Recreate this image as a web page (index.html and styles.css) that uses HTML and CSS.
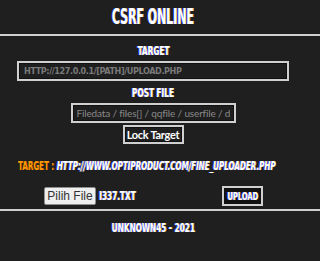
FILE: index.html
```html
<!DOCTYPE html>
<html lang="en">
<head>
    <meta charset="UTF-8">
    <meta name="viewport" content="width=device-width, initial-scale=1.0">
    <title>CSRF Online</title>
    <link rel="stylesheet" href="styles.css">
</head>
<body>
    <h1 class="title"><span class="cond">CSRF ONLINE</span></h1>
    <hr class="rule">

    <form class="panel" onsubmit="return false">
        <label class="label" for="target"><span class="cond">TARGET</span></label>
        <input class="field field-url" id="target" type="text" placeholder="HTTP://127.0.0.1/[PATH]/UPLOAD.PHP">

        <label class="label" for="post"><span class="cond">POST FILE</span></label>
        <input class="field field-post" id="post" type="text" placeholder="Filedata / files[] / qqfile / userfile / dl">

        <button class="lock-btn" type="button">Lock Target</button>
    </form>

    <p class="target-line"><span class="cond cond-left"><span class="target-key">TARGET :</span> <span class="target-val">HTTP://WWW.OPTIPRODUCT.COM/FINE_UPLOADER.PHP</span></span></p>

    <div class="upload-row">
        <div class="file-pick">
            <span class="file-btn">Pilih File</span>
            <span class="file-name"><span class="cond cond-left">I337.TXT</span></span>
        </div>
        <button class="upload-btn" type="button"><span class="cond">UPLOAD</span></button>
    </div>

    <hr class="rule rule-bottom">
    <p class="footer"><span class="cond">UNKNOWN45 - 2021</span></p>
</body>
</html>
```

FILE: styles.css
```css
body {
    margin: 0;
    padding-right: 14px;
    background: #1f1f1f;
    color: #fff;
    font-family: "DejaVu Sans Condensed", "DejaVu Sans", sans-serif;
    text-align: center;
}
/* narrow display face look-alike */
.cond {
    display: inline-block;
    white-space: nowrap;
    transform: scaleX(0.68);
}
.cond-left { transform-origin: left center; }
.title, .label, .footer, .target-line, .upload-btn, .file-name {
    font-weight: bold;
    text-shadow: -1px 0 #3048ff, 1px 0 #e9c76a;
}
.title {
    margin: 0;
    padding-top: 6px;
    font-size: 21px;
    line-height: 22px;
}
.title .cond { transform: scaleX(0.58); }
.rule {
    margin: 6px -14px 0 0;
    border: 0;
    border-top: 2px solid #cfcfcf;
    height: 0;
}
.panel {
    display: flex;
    flex-direction: column;
    align-items: center;
    padding-top: 8px;
}
.label {
    font-size: 12px;
    line-height: 14px;
}
.field {
    box-sizing: border-box;
    height: 20px;
    margin: 3px 0 5px;
    background: #1f1f1f;
    border: 2px solid #d0d0d0;
    outline: 1px solid #111;
    outline-offset: -3px;
    color: #ddd;
    padding: 0 5px;
}
.field-url {
    width: 272px;
    font-family: "DejaVu Sans Condensed", sans-serif;
    font-weight: bold;
    font-size: 9px;
    letter-spacing: -0.4px;
}
.field-post {
    width: 165px;
    margin-bottom: 3px;
    padding: 0 4px;
    font-family: Lato, "Open Sans", sans-serif;
    font-size: 10px;
    letter-spacing: -0.15px;
}
.field::placeholder { color: #8a8a8a; }
.field-url::placeholder { color: #7a7a7a; }
.lock-btn {
    box-sizing: border-box;
    margin-top: -1px;
    height: 19px;
    width: 61px;
    padding: 0;
    background: #1f1f1f;
    border: 2px solid #d0d0d0;
    outline: 1px solid #111;
    outline-offset: -3px;
    color: #fff;
    font-family: Lato, "Open Sans", sans-serif;
    font-size: 11px;
    font-weight: bold;
    letter-spacing: -0.3px;
}
.target-line {
    margin: 15px -14px 0 0;
    padding-left: 18px;
    text-align: left;
    overflow: hidden;
    font-size: 12px;
    line-height: 14px;
}
.target-line .cond { transform: scaleX(0.66); }
.target-key { color: #ff9a00; text-shadow: 1px 0 #7a3a00; }
.target-val { font-style: italic; }
.upload-row {
    display: flex;
    align-items: center;
    justify-content: space-between;
    margin-top: 13px;
    padding: 0 43px 0 44px;
}
.file-pick {
    display: flex;
    align-items: center;
    gap: 3px;
}
.file-btn {
    box-sizing: border-box;
    height: 18px;
    width: 52px;
    line-height: 16px;
    background: #efefef;
    border: 1px solid #8f8f8f;
    border-radius: 2px;
    color: #333;
    font-family: "Liberation Sans", Arial, sans-serif;
    font-size: 12px;
}
.file-name {
    font-size: 12px;
}
.upload-btn {
    box-sizing: border-box;
    height: 20px;
    width: 41px;
    padding: 0;
    background: #111;
    border: 2px solid #d0d0d0;
    outline: 1px solid #111;
    outline-offset: -3px;
    color: #fff;
    font-family: "DejaVu Sans Condensed", sans-serif;
    font-size: 11px;
}
.upload-btn .cond { margin: 0 -10px; }
.rule-bottom { margin-top: 3px; }
.footer {
    margin: 10px 0 0;
    font-size: 12px;
    line-height: 14px;
}
```
